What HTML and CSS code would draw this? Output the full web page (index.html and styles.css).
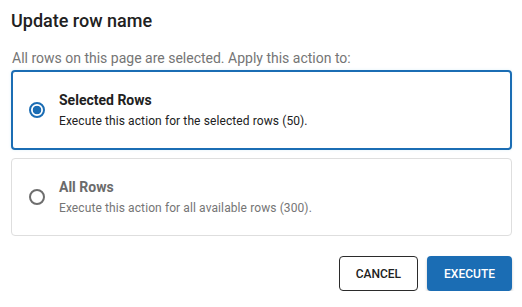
FILE: index.html
```html
<!DOCTYPE html>
<html lang="en">
<head>
    <meta charset="UTF-8">
    <meta name="viewport" content="width=device-width, initial-scale=1.0">
    <title>Update row name</title>
    <link rel="stylesheet" href="styles.css">
</head>
<body>
    <div class="dialog">
        <h1 class="dialog-title">Update row name</h1>
        <p class="dialog-subtitle">All rows on this page are selected. Apply this action to:</p>

        <div class="options">
            <label class="option selected">
                <span class="radio"></span>
                <span class="option-text">
                    <span class="option-title">Selected Rows</span>
                    <span class="option-desc">Execute this action for the selected rows (50).</span>
                </span>
            </label>
            <label class="option">
                <span class="radio"></span>
                <span class="option-text">
                    <span class="option-title">All Rows</span>
                    <span class="option-desc">Execute this action for all available rows (300).</span>
                </span>
            </label>
        </div>

        <div class="actions">
            <button class="btn btn-outline">Cancel</button>
            <button class="btn btn-primary">Execute</button>
        </div>
    </div>
</body>
</html>
```

FILE: styles.css
```css
:root {
    --primary-color: #1b6db4;
    --text-color: #212121;
    --muted-color: #757575;
    --border-color: #dedede;
}

body {
    margin: 0;
    background: white;
    font-family: Roboto, "Noto Sans", Arial, sans-serif;
    color: var(--text-color);
}

.dialog {
    padding: 9px 10px 0 11px;
}

.dialog-title {
    margin: 0;
    font-size: 18px;
    line-height: 24px;
    font-weight: 500;
}

.dialog-subtitle {
    margin: 15px 0 0 1px;
    font-size: 14px;
    line-height: 20px;
    color: var(--muted-color);
}

.options {
    display: flex;
    flex-direction: column;
    gap: 8px;
    margin-top: 2px;
}

.option {
    display: flex;
    align-items: center;
    gap: 12px;
    padding: 18px 15px 18px 15px;
    border: 1px solid var(--border-color);
    border-radius: 4px;
    cursor: pointer;
}

.option.selected {
    padding: 18px 14px;
    border: 2px solid var(--primary-color);
    box-shadow: 0 0 3px rgba(40, 170, 210, 0.15);
}

.radio {
    flex: none;
    width: 20px;
    height: 20px;
    display: flex;
    align-items: center;
    justify-content: center;
}

.radio::before {
    content: '';
    width: 12px;
    height: 12px;
    border: 2px solid #6e6e6e;
    border-radius: 50%;
    box-sizing: content-box;
}

.option.selected .radio::before {
    border-color: var(--primary-color);
    background: radial-gradient(circle, var(--primary-color) 0 4px, white 4.6px);
}

.option-text {
    display: flex;
    flex-direction: column;
}

.option-title {
    font-size: 14px;
    line-height: 20px;
    font-weight: 700;
}

.option-desc {
    margin-top: 2px;
    font-size: 12px;
    line-height: 18px;
    letter-spacing: 0.1px;
}

.option:not(.selected) .option-title {
    color: #6b6b6b;
}

.option:not(.selected) .option-desc {
    color: var(--muted-color);
}

.actions {
    display: flex;
    justify-content: flex-end;
    gap: 9px;
    margin-top: 20px;
}

.btn {
    height: 35px;
    padding: 0 16px;
    border-radius: 4px;
    font-family: inherit;
    font-size: 12px;
    font-weight: 500;
    text-transform: uppercase;
    cursor: pointer;
}

.btn-outline {
    background: white;
    border: 1px solid #2b2b2b;
    color: var(--text-color);
}

.btn-primary {
    background: var(--primary-color);
    border: none;
    color: white;
    padding: 0 17px;
    box-shadow: 0 2px 3px rgba(0, 0, 0, 0.22);
}
```
